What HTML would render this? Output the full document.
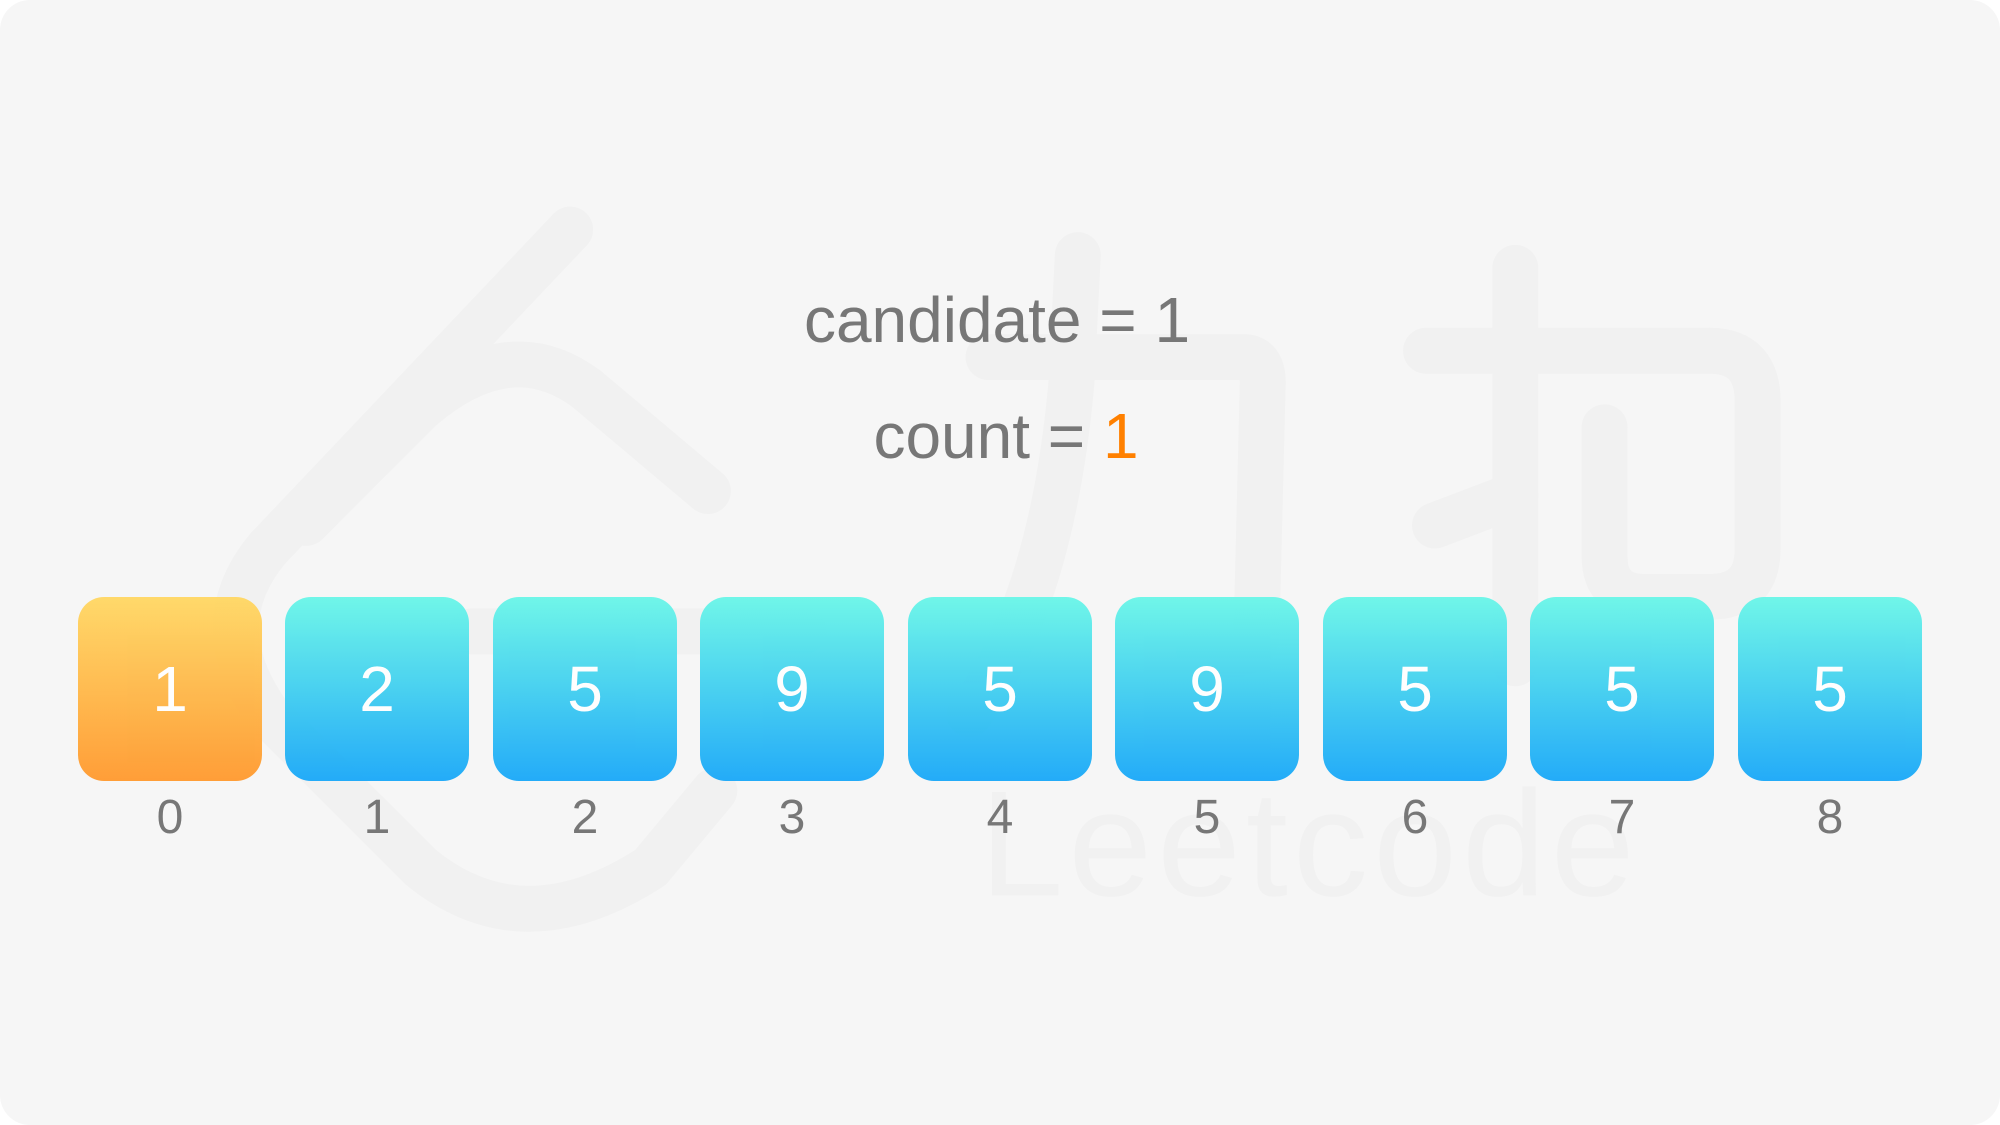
<!DOCTYPE html>
<html><head><meta charset="utf-8"><style>
html,body{margin:0;padding:0;background:#fff;}
#c{position:relative;width:2000px;height:1125px;background:#f6f6f6;border-radius:30px;overflow:hidden;font-family:"Liberation Sans",Arial,sans-serif;}
svg.wm{position:absolute;left:0;top:0;}
.box{position:absolute;top:597px;width:184px;height:184px;border-radius:26px;color:#fff;font-size:64px;display:flex;align-items:center;justify-content:center;background:linear-gradient(#6cf6e8,#1da9f8);opacity:.97}
.box.o{background:linear-gradient(#ffd866,#ff9b32)}
.lbl{position:absolute;top:790px;width:184px;text-align:center;font-size:48px;color:#777;}
.t{position:absolute;left:0;width:2000px;text-align:center;font-size:64px;color:#777;}
</style></head><body><div id="c">
<svg class="wm" width="2000" height="1125" viewBox="0 0 1568 882">
<g fill="none" stroke="#f1f1f1" stroke-width="36" stroke-linecap="round" stroke-linejoin="round">
<path d="M447,180 L210,430 Q160,490 210,560 L330,680 Q410,745 510,680 L560,620"/>
<path d="M555,385 L460,305 Q400,260 330,320 L240,410"/>
<path d="M370,495 L630,495"/>
<path d="M845,200 L840,300 Q825,470 760,560"/>
<path d="M775,280 L975,280 Q990,280 990,300 L985,500 Q980,520 940,510"/>
<path d="M1188,210 L1188,520"/>
<path d="M1118,275 L1340,275 Q1378,275 1378,315 L1378,430 Q1378,468 1340,468 L1290,468 Q1258,468 1258,436 L1258,335"/>
<path d="M1125,412 L1188,388"/>
</g>
<text x="768" y="702" font-family="Liberation Sans, sans-serif" font-size="118" fill="#f1f1f1" letter-spacing="4">Leetcode</text>
</svg>
<div class="t" style="top:283px;left:-3px">candidate = 1</div>
<div class="t" style="top:399px;left:6px">count = <span style="color:#ff8000">1</span></div>
<div class="box o" style="left:78px">1</div>
<div class="box" style="left:285px">2</div>
<div class="box" style="left:493px">5</div>
<div class="box" style="left:700px">9</div>
<div class="box" style="left:908px">5</div>
<div class="box" style="left:1115px">9</div>
<div class="box" style="left:1323px">5</div>
<div class="box" style="left:1530px">5</div>
<div class="box" style="left:1738px">5</div>
<div class="lbl" style="left:78px">0</div>
<div class="lbl" style="left:285px">1</div>
<div class="lbl" style="left:493px">2</div>
<div class="lbl" style="left:700px">3</div>
<div class="lbl" style="left:908px">4</div>
<div class="lbl" style="left:1115px">5</div>
<div class="lbl" style="left:1323px">6</div>
<div class="lbl" style="left:1530px">7</div>
<div class="lbl" style="left:1738px">8</div>
</div></body></html>
